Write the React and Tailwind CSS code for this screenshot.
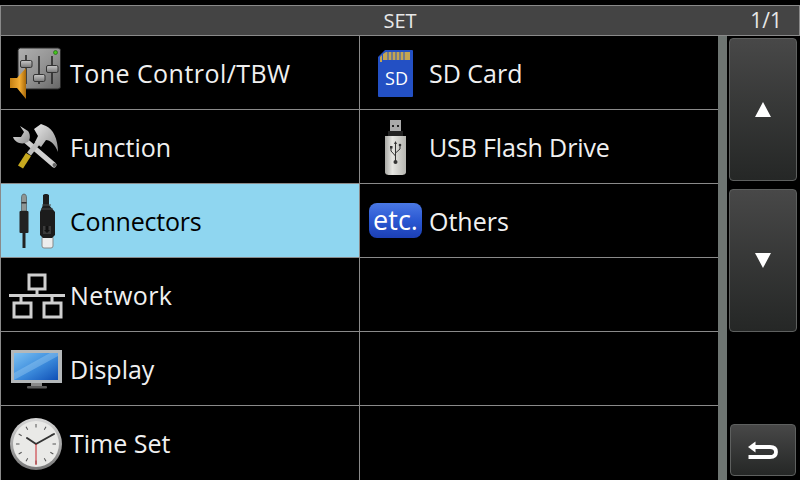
const FONT = "font-['Open_Sans','Noto_Sans',sans-serif]";

// every icon uses a viewBox in screen coordinates of its slot, 69x73
function Icon({ x, y, children }) {
  return (
    <svg className="shrink-0" width="69" height="73" viewBox={`${x} ${y} 69 73`}>
      {children}
    </svg>
  );
}

function ToneIcon() {
  return (
    <Icon x={1} y={36}>
      <defs>
        <linearGradient id="tone" x1="0" y1="0" x2="1" y2="1">
          <stop offset="0" stopColor="#b0b0b0" />
          <stop offset="0.5" stopColor="#949494" />
          <stop offset="1" stopColor="#666" />
        </linearGradient>
        <linearGradient id="knob" x1="0" y1="0" x2="0" y2="1">
          <stop offset="0" stopColor="#c8c8c8" />
          <stop offset="1" stopColor="#777" />
        </linearGradient>
        <linearGradient id="spk" x1="0" y1="0" x2="1" y2="0">
          <stop offset="0" stopColor="#c47f12" />
          <stop offset="0.6" stopColor="#f4ae35" />
          <stop offset="1" stopColor="#a86808" />
        </linearGradient>
      </defs>
      <rect x="18" y="48" width="42.500" height="41" rx="2.500" fill="url(#tone)" stroke="#2a2a2a" />
      <path d="M26 55V84M39 56V84M52 56V84" stroke="#222" strokeWidth="1.500" />
      <rect x="20.500" y="60.500" width="11.500" height="7" rx="1.500" fill="url(#knob)" stroke="#333" />
      <rect x="33.500" y="74.500" width="11.500" height="7" rx="1.500" fill="url(#knob)" stroke="#333" />
      <rect x="46.500" y="65.500" width="11.500" height="7" rx="1.500" fill="url(#knob)" stroke="#333" />
      <circle cx="55.500" cy="52.500" r="2" fill="#45c41e" stroke="#1d5c10" strokeWidth="0.600" />
      <path d="M10 78H17L26 68V99L17 88H10Z" fill="url(#spk)" />
    </Icon>
  );
}

function FunctionIcon() {
  return (
    <Icon x={1} y={110}>
      <defs>
        <linearGradient id="steel" x1="0" y1="0" x2="1" y2="1">
          <stop offset="0" stopColor="#e8e8e8" />
          <stop offset="1" stopColor="#8f8f8f" />
        </linearGradient>
      </defs>
      <path d="M26 141L54 165" stroke="#d0d0d0" strokeWidth="5" strokeLinecap="round" />
      <circle cx="54.500" cy="165" r="2" fill="#666" />
      <path d="M13 137C15 143 22 145 28 142C31 139 30 133 28 131L20 126L24 132L21 137L17 137Z" fill="url(#steel)" />
      <path d="M40 140L29 154" stroke="#bdbdbd" strokeWidth="5" />
      <path d="M28.500 154.500L20.500 167" stroke="#c7a91f" strokeWidth="6" />
      <path d="M34 129L41 124L46 126C53 129 58 139 58 152C55 144 50 140 46 140L41 147L35 142L38 136Z" fill="url(#steel)" />
    </Icon>
  );
}

function ConnectorIcon() {
  return (
    <Icon x={1} y={184}>
      <path d="M24 194C22 194 21.500 196 21.500 198V211H26.500V198C26.500 196 26 194 24 194Z" fill="#8f9694" stroke="#333" strokeWidth="0.500" />
      <rect x="21.500" y="202" width="5" height="1.500" fill="#333" />
      <rect x="19.500" y="211" width="9" height="22" rx="1" fill="#222" />
      <path d="M24 233V248" stroke="#222" strokeWidth="3" />
      <rect x="42" y="236" width="11" height="12" rx="2" fill="#ededed" stroke="#888" />
      <path d="M43 195C44 193.500 48 193.500 49 195V205L55 212V235L52 238H43L40 235V212L43 205Z" fill="#1c1c1c" />
      <path d="M42 205H51M41 209H53" stroke="#4a4a4a" strokeWidth="1" />
      <rect x="43" y="226" width="8" height="8" fill="#3a3a3a" />
      <path d="M45.500 226H48.500V230H50L47 233L44 230H45.500Z" fill="#111" />
    </Icon>
  );
}

function NetworkIcon() {
  return (
    <Icon x={1} y={258}>
      <g fill="none" stroke="#cfcfcf" strokeWidth="3">
        <rect x="29" y="275" width="16" height="14" />
        <path d="M37 289V295M9 295.500H65M21 295V303M52 295V303" />
        <rect x="14" y="303" width="17" height="14" />
        <rect x="44" y="303" width="17" height="14" />
      </g>
    </Icon>
  );
}

function DisplayIcon() {
  return (
    <Icon x={1} y={332}>
      <defs>
        <linearGradient id="scr" x1="0" y1="0" x2="1" y2="1">
          <stop offset="0" stopColor="#7cc0f2" />
          <stop offset="0.5" stopColor="#3f8fde" />
          <stop offset="1" stopColor="#0f4fb6" />
        </linearGradient>
      </defs>
      <rect x="11" y="350" width="51" height="33" fill="#b4b8ba" />
      <rect x="14" y="353" width="44" height="27" fill="url(#scr)" />
      <path d="M14 380L58 356V353H50L14 373Z" fill="#a8d4f4" fillOpacity="0.35" />
      <rect x="31" y="383" width="11" height="3" fill="#8a8a8a" />
      <rect x="27" y="386" width="20" height="2.500" rx="1" fill="#5c5c5c" />
    </Icon>
  );
}

function ClockIcon() {
  const ticks = [0, 30, 60, 90, 120, 150, 180, 210, 240, 270, 300, 330];
  return (
    <Icon x={1} y={406}>
      <defs>
        <linearGradient id="rim" x1="0" y1="0" x2="0" y2="1">
          <stop offset="0" stopColor="#d8d8d8" />
          <stop offset="1" stopColor="#777" />
        </linearGradient>
      </defs>
      <circle cx="36" cy="443" r="26" fill="url(#rim)" />
      <circle cx="36" cy="443" r="23" fill="#e9e9e7" />
      {ticks.map((a) => (
        <path key={a} d="M36 423V426.500" stroke="#555" strokeWidth="1" transform={`rotate(${a} 36 443)`} />
      ))}
      <path d="M36 443L54 433M36 443L27 437" stroke="#333" strokeWidth="2" strokeLinecap="round" />
      <path d="M36 443V464" stroke="#c8242c" strokeWidth="1" />
    </Icon>
  );
}

function SdIcon() {
  return (
    <Icon x={360} y={36}>
      <path d="M385 50H412A1 1 0 0 1 413 51V96A1 1 0 0 1 412 97H379A1 1 0 0 1 378 96V57Z" fill="#2350c4" />
      <path d="M380 62V57L382 55V62ZM383 54L386 52H410V60H383Z" fill="#c4a552" />
      <path d="M388 52V60M392 52V60M396 52V60M400 52V60M404 52V60" stroke="#2350c4" strokeWidth="1" />
      <text x="396.500" y="85" textAnchor="middle" fontSize="18" fill="#fff" fontFamily="Open Sans">SD</text>
    </Icon>
  );
}

function UsbIcon() {
  return (
    <Icon x={360} y={110}>
      <defs>
        <linearGradient id="usb" x1="0" y1="0" x2="1" y2="0">
          <stop offset="0" stopColor="#a8a8a4" />
          <stop offset="0.35" stopColor="#e6e6e2" />
          <stop offset="1" stopColor="#b5b5b0" />
        </linearGradient>
      </defs>
      <rect x="390" y="120" width="11" height="12" fill="#aaa" />
      <rect x="392" y="125" width="2" height="2" fill="#222" />
      <rect x="397" y="125" width="2" height="2" fill="#222" />
      <rect x="388" y="131" width="15" height="5" fill="#222" />
      <path d="M385 136H406V172C406 176 400 175 395.500 175C391 175 385 176 385 172Z" fill="url(#usb)" />
      <path d="M395.500 143V161M395.500 156L391 151V147M395.500 153L400 149V146" fill="none" stroke="#333" strokeWidth="1" />
      <circle cx="395.500" cy="162" r="2" fill="#333" />
      <path d="M394 144L395.500 141L397 144Z" fill="#333" />
      <rect x="390" y="146" width="2.500" height="2.500" fill="#333" />
      <circle cx="400" cy="145" r="1.300" fill="#333" />
    </Icon>
  );
}

function EtcIcon() {
  return (
    <Icon x={360} y={184}>
      <defs>
        <linearGradient id="etc" x1="0" y1="0" x2="0" y2="1">
          <stop offset="0" stopColor="#4a78e4" />
          <stop offset="0.5" stopColor="#2a58d2" />
          <stop offset="1" stopColor="#1c3fb4" />
        </linearGradient>
      </defs>
      <rect x="369" y="203" width="53" height="35" rx="8" fill="url(#etc)" />
      <text x="395.500" y="230" textAnchor="middle" fontSize="27" fill="#fff" fontFamily="Open Sans">etc.</text>
    </Icon>
  );
}

function Row({ label, icon, active, last, labelClass = "" }) {
  return (
    <div
      className={`flex h-[74px] items-center text-[25px] ${
        active ? "bg-[#8fd6f0] text-black" : "text-[#f0f0f0]"
      } ${last ? "" : "border-b border-[#8a8a8a]"}`}
    >
      {icon}
      {label ? <span className={`whitespace-nowrap pt-[2px] ${labelClass}`}>{label}</span> : null}
    </div>
  );
}

function SideButton({ className, children }) {
  return (
    <div
      className={`flex items-center justify-center rounded-[4px] border border-[#5e605f] bg-gradient-to-b from-[#484848] to-[#252726] ${className}`}
    >
      {children}
    </div>
  );
}

export default function App() {
  return (
    <div className={`flex h-[480px] w-[800px] flex-col overflow-hidden bg-black pt-[5px] ${FONT}`}>
      {/* header */}
      <div className="relative flex h-[31px] items-center justify-center border border-[#8a8a8a] bg-[#444444] text-[20px] text-[#e8e8e8]">
        SET
        <span className="absolute right-[17px] text-[21px]">1/1</span>
      </div>

      <div className="flex flex-1">
        {/* menu */}
        <div className="grid w-[718px] grid-cols-[359px_358px] border-l border-[#8a8a8a]">
          <div className="border-r border-[#8a8a8a]">
            <Row label="Tone Control/TBW" icon={<ToneIcon />} labelClass="tracking-[0.45px]" />
            <Row label="Function" icon={<FunctionIcon />} />
            <Row label="Connectors" icon={<ConnectorIcon />} active labelClass="tracking-[-0.2px]" />
            <Row label="Network" icon={<NetworkIcon />} labelClass="tracking-[0.4px]" />
            <Row label="Display" icon={<DisplayIcon />} />
            <Row label="Time Set" icon={<ClockIcon />} last />
          </div>
          <div>
            <Row label="SD Card" icon={<SdIcon />} />
            <Row label="USB Flash Drive" icon={<UsbIcon />} labelClass="tracking-[-0.13px]" />
            <Row label="Others" icon={<EtcIcon />} />
            <Row />
            <Row />
            <Row last />
          </div>
        </div>

        {/* scrollbar */}
        <div className="w-[9px] bg-[#6e7572]" />

        {/* side buttons */}
        <div className="flex flex-1 flex-col pt-[2px] pl-[2px] pr-[3px]">
          <SideButton className="h-[143px]">
            <svg width="16" height="15" viewBox="0 0 16 15">
              <path d="M8 0L16 15H0Z" fill="#fff" />
            </svg>
          </SideButton>
          <SideButton className="mt-[8px] h-[143px]">
            <svg width="16" height="15" viewBox="0 0 16 15">
              <path d="M0 0H16L8 15Z" fill="#fff" />
            </svg>
          </SideButton>
          <SideButton className="mt-[92px] ml-[1px] mr-[1px] h-[52px]">
            <svg width="30" height="20" viewBox="0 0 30 20">
              <path d="M6 7H22C26 7 28 9 28 12C28 15 26 17 22 17H0.500" fill="none" stroke="#fff" strokeWidth="3.800" />
              <path d="M0 7L7.500 1.500V12.500Z" fill="#fff" />
            </svg>
          </SideButton>
        </div>
      </div>
    </div>
  );
}
